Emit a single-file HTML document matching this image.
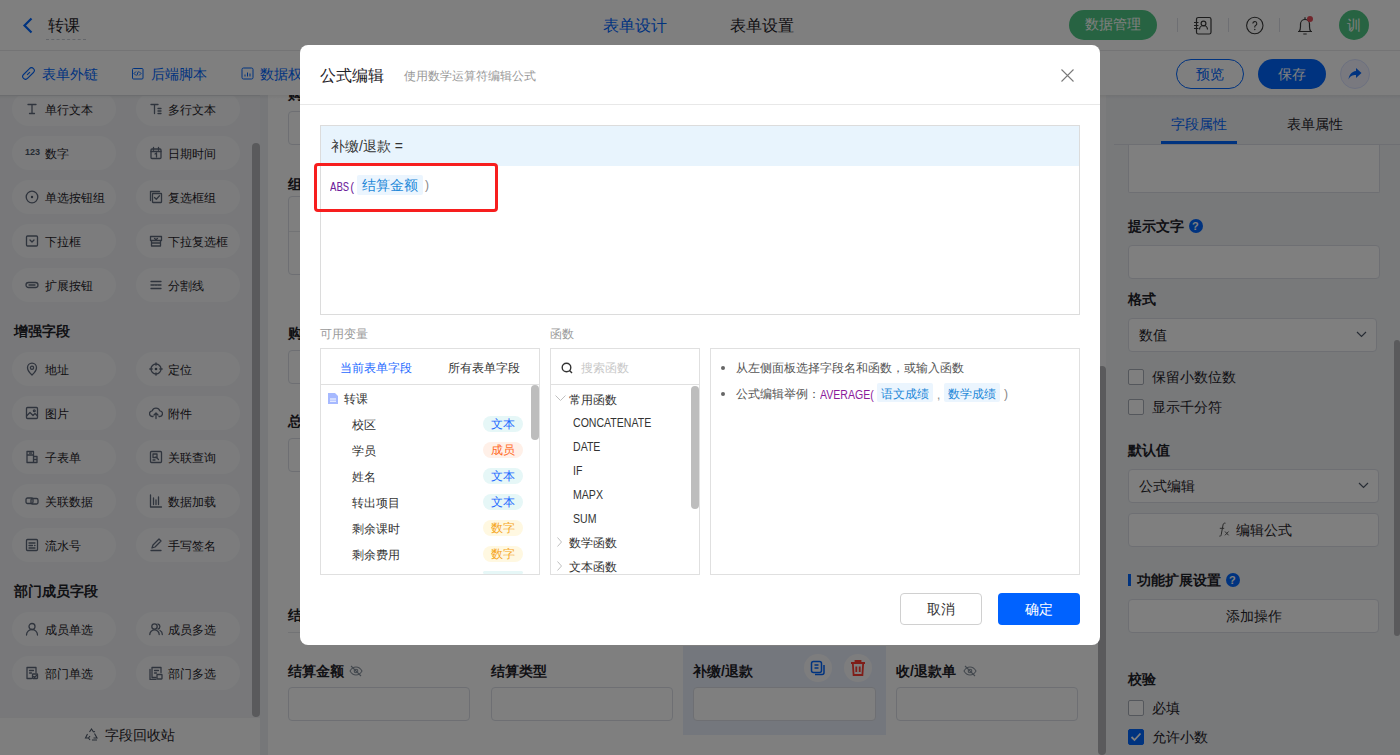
<!DOCTYPE html>
<html><head><meta charset="utf-8">
<style>
*{box-sizing:border-box;margin:0;padding:0}
html,body{width:1400px;height:755px;overflow:hidden;font-family:"Liberation Sans",sans-serif;color:#1f2329;background:#fff}
.abs{position:absolute}
.t{position:absolute;white-space:nowrap;line-height:1}
#page{position:absolute;left:0;top:0;width:1400px;height:755px;background:#fff;overflow:hidden}
#mask{position:absolute;left:0;top:0;width:1400px;height:755px;background:rgba(0,0,0,.5)}
#modal{position:absolute;left:300px;top:45px;width:800px;height:600px;background:#fff;border-radius:8px;overflow:hidden}
.pill{position:absolute;width:104px;height:34px;border-radius:17px;background:#f8f9fb}
.ic{position:absolute;fill:none;stroke:#5f687a;stroke-width:1.3;stroke-linecap:round;stroke-linejoin:round}
.pt{font-size:12px;color:#1f2329}
.num123{font-size:9px;font-weight:bold;color:#4e5969;letter-spacing:0}
.sec{font-size:14px;font-weight:bold;color:#1f2329}
.lbl{font-size:14px;font-weight:bold;color:#1f2329}
.cb{width:16px;height:16px;border:1px solid #a9aeb8;border-radius:2px;background:#fff}
.m12{font-size:12px;color:#333}
.fn{font-size:12px;color:#333;transform:scaleX(.88);transform-origin:0 0}
.tag{position:absolute;width:40px;height:16px;border-radius:8px;font-size:12px;line-height:16px;text-align:center}
.t1{background:#e6f7f7;color:#1f6bff}
.t2{background:#fff0e8;color:#ff6a1f}
.t3{background:#fff8e1;color:#f5a623}
.inp{position:absolute;border:1px solid #dcdfe6;border-radius:4px;background:#fff}
</style></head><body>
<div id="page">
  <!-- sidebar -->
  <div class="abs" style="left:0;top:95px;width:260px;height:660px;background:#f0f1f4"></div>
  <div class="pill" style="left:12px;top:92px"></div>
<svg class="ic" style="left:25px;top:102px" width="14" height="14" viewBox="0 0 14 14"><path d="M3 2.5h8M7 2.5v9M4.5 11.5h5" /></svg>
<div class="t pt" style="left:45px;top:104px">单行文本</div>
<div class="pill" style="left:136px;top:92px"></div>
<svg class="ic" style="left:149px;top:102px" width="14" height="14" viewBox="0 0 14 14"><path d="M2 2.5h7M5.5 2.5v9M9 6.5h3M9 9h3M9 11.5h3"/></svg>
<div class="t pt" style="left:168px;top:104px">多行文本</div>
<div class="pill" style="left:12px;top:136px"></div>
<div class="t num123" style="left:25px;top:148px">123</div>
<div class="t pt" style="left:45px;top:148px">数字</div>
<div class="pill" style="left:136px;top:136px"></div>
<svg class="ic" style="left:149px;top:146px" width="14" height="14" viewBox="0 0 14 14"><rect x="2" y="3" width="10" height="9.5" rx="1"/><path d="M2 5.5h10M4.5 1.5v2.5M9.5 1.5v2.5M6 8l1.5-1v4"/></svg>
<div class="t pt" style="left:168px;top:148px">日期时间</div>
<div class="pill" style="left:12px;top:180px"></div>
<svg class="ic" style="left:25px;top:190px" width="14" height="14" viewBox="0 0 14 14"><circle cx="7" cy="7" r="5.8"/><circle cx="7" cy="7" r="1.2" fill="#4e5969" stroke="none"/></svg>
<div class="t pt" style="left:45px;top:192px">单选按钮组</div>
<div class="pill" style="left:136px;top:180px"></div>
<svg class="ic" style="left:149px;top:190px" width="14" height="14" viewBox="0 0 14 14"><path d="M1.5 10.5V1.5h9"/><rect x="3.5" y="3.5" width="9" height="9" rx="0.5"/><path d="M5.5 7.5l1.8 1.8 3.2-3.5"/></svg>
<div class="t pt" style="left:168px;top:192px">复选框组</div>
<div class="pill" style="left:12px;top:224px"></div>
<svg class="ic" style="left:25px;top:234px" width="14" height="14" viewBox="0 0 14 14"><rect x="1.5" y="2" width="11" height="10" rx="1"/><path d="M5 6l2 2 2-2"/></svg>
<div class="t pt" style="left:45px;top:236px">下拉框</div>
<div class="pill" style="left:136px;top:224px"></div>
<svg class="ic" style="left:149px;top:234px" width="14" height="14" viewBox="0 0 14 14"><path d="M1.5 2.5h11v4h-11zM2.5 6.5v5.5h9V6.5M2.5 9h9M5.5 4.5l1.5 1 1.5-1"/></svg>
<div class="t pt" style="left:168px;top:236px">下拉复选框</div>
<div class="pill" style="left:12px;top:268px"></div>
<svg class="ic" style="left:25px;top:278px" width="14" height="14" viewBox="0 0 14 14"><rect x="1" y="4.5" width="12" height="5" rx="2.5"/><path d="M4 7h6"/></svg>
<div class="t pt" style="left:45px;top:280px">扩展按钮</div>
<div class="pill" style="left:136px;top:268px"></div>
<svg class="ic" style="left:149px;top:278px" width="14" height="14" viewBox="0 0 14 14"><path d="M2 3.5h10M2 7h3M6 7h2M9 7h3M2 10.5h10"/></svg>
<div class="t pt" style="left:168px;top:280px">分割线</div>
<div class="pill" style="left:12px;top:352px"></div>
<svg class="ic" style="left:25px;top:362px" width="14" height="14" viewBox="0 0 14 14"><path d="M7 13s-4.5-4.2-4.5-7.3a4.5 4.5 0 0 1 9 0C11.5 8.8 7 13 7 13z"/><circle cx="7" cy="5.8" r="1.6"/></svg>
<div class="t pt" style="left:45px;top:364px">地址</div>
<div class="pill" style="left:136px;top:352px"></div>
<svg class="ic" style="left:149px;top:362px" width="14" height="14" viewBox="0 0 14 14"><circle cx="7" cy="7" r="5"/><circle cx="7" cy="7" r="1.3" fill="#4e5969" stroke="none"/><path d="M7 .8v2.4M7 10.8v2.4M.8 7h2.4M10.8 7h2.4"/></svg>
<div class="t pt" style="left:168px;top:364px">定位</div>
<div class="pill" style="left:12px;top:396px"></div>
<svg class="ic" style="left:25px;top:406px" width="14" height="14" viewBox="0 0 14 14"><rect x="1.5" y="1.5" width="11" height="11" rx="1"/><path d="M1.5 10l3.5-3.5 3 3 2-2 2.5 2.5"/><circle cx="9.3" cy="4.7" r="0.9"/></svg>
<div class="t pt" style="left:45px;top:408px">图片</div>
<div class="pill" style="left:136px;top:396px"></div>
<svg class="ic" style="left:149px;top:406px" width="14" height="14" viewBox="0 0 14 14"><path d="M4 10.5H3.5a2.8 2.8 0 0 1-.3-5.6 4 4 0 0 1 7.6 0 2.8 2.8 0 0 1-.3 5.6H10M7 12.5V7M5 9l2-2 2 2"/></svg>
<div class="t pt" style="left:168px;top:408px">附件</div>
<div class="pill" style="left:12px;top:440px"></div>
<svg class="ic" style="left:25px;top:450px" width="14" height="14" viewBox="0 0 14 14"><path d="M2 1.5h6.5v11H2zM2 5h6.5M8.5 6.5h3.5v6H8.5M8.5 9.5h3.5M4.5 3.2h2"/></svg>
<div class="t pt" style="left:45px;top:452px">子表单</div>
<div class="pill" style="left:136px;top:440px"></div>
<svg class="ic" style="left:149px;top:450px" width="14" height="14" viewBox="0 0 14 14"><rect x="1.5" y="1.5" width="11" height="11" rx="1"/><rect x="4" y="4" width="4" height="3.5"/><path d="M7 7l2.5 2.5M4 10h2"/></svg>
<div class="t pt" style="left:168px;top:452px">关联查询</div>
<div class="pill" style="left:12px;top:484px"></div>
<svg class="ic" style="left:25px;top:494px" width="14" height="14" viewBox="0 0 14 14"><rect x="1" y="4" width="7" height="5.5" rx="1.5"/><rect x="6" y="4.5" width="7" height="5.5" rx="1.5"/></svg>
<div class="t pt" style="left:45px;top:496px">关联数据</div>
<div class="pill" style="left:136px;top:484px"></div>
<svg class="ic" style="left:149px;top:494px" width="14" height="14" viewBox="0 0 14 14"><path d="M1.5 1v12h11M4.5 4v6.5M7 6v4.5M9.5 3v7.5"/></svg>
<div class="t pt" style="left:168px;top:496px">数据加载</div>
<div class="pill" style="left:12px;top:528px"></div>
<svg class="ic" style="left:25px;top:538px" width="14" height="14" viewBox="0 0 14 14"><rect x="1.5" y="1.5" width="11" height="11" rx="1"/><path d="M4 5h6M4 7.5h3.5M4 10h6M9.5 7.5h.5"/></svg>
<div class="t pt" style="left:45px;top:540px">流水号</div>
<div class="pill" style="left:136px;top:528px"></div>
<svg class="ic" style="left:149px;top:538px" width="14" height="14" viewBox="0 0 14 14"><path d="M2 12.5h10M3 10l1-3 6-6 2 2-6 6z"/></svg>
<div class="t pt" style="left:168px;top:540px">手写签名</div>
<div class="pill" style="left:12px;top:612px"></div>
<svg class="ic" style="left:25px;top:622px" width="14" height="14" viewBox="0 0 14 14"><circle cx="7" cy="4.5" r="3"/><path d="M1.5 13a5.5 5.5 0 0 1 11 0"/></svg>
<div class="t pt" style="left:45px;top:624px">成员单选</div>
<div class="pill" style="left:136px;top:612px"></div>
<svg class="ic" style="left:149px;top:622px" width="14" height="14" viewBox="0 0 14 14"><circle cx="5.5" cy="4.5" r="2.7"/><path d="M.8 12.5a4.7 4.7 0 0 1 9.4 0M9 2a2.6 2.6 0 0 1 0 5M11 8.5a4.3 4.3 0 0 1 2.3 4"/></svg>
<div class="t pt" style="left:168px;top:624px">成员多选</div>
<div class="pill" style="left:12px;top:656px"></div>
<svg class="ic" style="left:25px;top:666px" width="14" height="14" viewBox="0 0 14 14"><path d="M2 1.5h9v5M2 1.5v11h4.5M4.5 4.5h4M4.5 7h2"/><rect x="7.5" y="8" width="5" height="4.5" rx="0.5"/><path d="M8.5 10.5l1 1 2-2"/></svg>
<div class="t pt" style="left:45px;top:668px">部门单选</div>
<div class="pill" style="left:136px;top:656px"></div>
<svg class="ic" style="left:149px;top:666px" width="14" height="14" viewBox="0 0 14 14"><path d="M1 3.5v10h6M3 1.5h9v5M3 1.5v10h4M5.5 4.5h4M5.5 7h2"/><rect x="8" y="8.5" width="5" height="4.5" rx="0.5"/></svg>
<div class="t pt" style="left:168px;top:668px">部门多选</div>
  <div class="t sec" style="left:14px;top:324px">增强字段</div>
  <div class="t sec" style="left:14px;top:584px">部门成员字段</div>
  <div class="abs" style="left:0;top:717px;width:260px;height:38px;background:#fdfdfd;border-top:1px solid #f0f0f2"></div>
  <svg class="abs" style="left:84px;top:728px" width="15" height="14" viewBox="0 0 15 14" fill="none" stroke="#4e5969" stroke-width="1.1"><path d="M5.5 4L7.5 1l2 3M10.5 5.5l2.5 4.5H9.5M4.5 10H1.5L3.5 6M6 12l-1.5-2L6 8M11 3.5l-1.5.5M8 12h5"/></svg>
  <div class="t" style="left:105px;top:728px;font-size:14px;color:#1f2329">字段回收站</div>
  <div class="abs" style="left:252px;top:143px;width:8px;height:574px;border-radius:4px;background:#b4b5b8"></div>
  <div class="abs" style="left:0;top:95px;width:260px;height:1px;background:#e5e6eb"></div>


  <!-- canvas -->
  <div class="abs" style="left:260px;top:95px;width:846px;height:660px;background:#eceef2"></div>
  <div class="abs" style="left:268px;top:95px;width:830px;height:660px;background:#fff"></div>
  <div class="t lbl" style="left:288px;top:87px">购买课时</div>
  <div class="inp" style="left:288px;top:111px;width:183px;height:34px"></div>
  <div class="t lbl" style="left:288px;top:177px">组合项目</div>
  <div class="inp" style="left:288px;top:196px;width:790px;height:79px"></div>
  <div class="abs" style="left:289px;top:231px;width:788px;height:1px;background:#e5e6eb"></div>
  <div class="t lbl" style="left:288px;top:326px">购买金额</div>
  <div class="inp" style="left:288px;top:350px;width:183px;height:34px"></div>
  <div class="t lbl" style="left:288px;top:414px">总金额</div>
  <div class="inp" style="left:288px;top:438px;width:183px;height:34px"></div>
  <div class="t lbl" style="left:288px;top:608px">结算信息</div>
  <div class="abs" style="left:288px;top:632px;width:790px;height:1px;background:#e5e6eb"></div>
  <div class="abs" style="left:683px;top:646px;width:203px;height:89px;background:#e9eefb"></div>
  <div class="t lbl" style="left:288px;top:664px">结算金额</div>
  <svg class="abs" style="left:349px;top:665px" width="14" height="12" viewBox="0 0 14 12" fill="none" stroke="#86909c" stroke-width="1.1"><path d="M1 6s2.3-4 6-4 6 4 6 4-2.3 4-6 4-6-4-6-4z"/><circle cx="7" cy="6" r="1.8"/><path d="M2 1l10 10"/></svg>
  <div class="inp" style="left:288px;top:687px;width:182px;height:34px"></div>
  <div class="t lbl" style="left:491px;top:664px">结算类型</div>
  <div class="inp" style="left:491px;top:687px;width:182px;height:34px"></div>
  <div class="t lbl" style="left:693px;top:664px">补缴/退款</div>
  <div class="abs" style="left:804px;top:654px;width:28px;height:28px;border-radius:14px;background:#fbfbfc"></div>
  <svg class="abs" style="left:810px;top:660px" width="16" height="16" viewBox="0 0 16 16" fill="none" stroke="#0066ff" stroke-width="1.5"><rect x="1.5" y="1.5" width="10" height="11" rx="2"/><path d="M4.5 5h4M4.5 8h4M14 5v7.5a2 2 0 0 1-2 2H5"/></svg>
  <div class="abs" style="left:844px;top:654px;width:28px;height:28px;border-radius:14px;background:#fbfbfc"></div>
  <svg class="abs" style="left:849px;top:659px" width="18" height="18" viewBox="0 0 18 18" fill="none" stroke="#ff3b30" stroke-width="1.8"><path d="M2 4h14M6.5 4V2h5v2M3.8 4l.8 12h8.8l.8-12M7.3 7.5v5.5M10.7 7.5v5.5"/></svg>
  <div class="inp" style="left:693px;top:687px;width:183px;height:34px"></div>
  <div class="t lbl" style="left:896px;top:664px">收/退款单</div>
  <svg class="abs" style="left:963px;top:665px" width="14" height="12" viewBox="0 0 14 12" fill="none" stroke="#86909c" stroke-width="1.1"><path d="M1 6s2.3-4 6-4 6 4 6 4-2.3 4-6 4-6-4-6-4z"/><circle cx="7" cy="6" r="1.8"/><path d="M2 1l10 10"/></svg>
  <div class="inp" style="left:896px;top:687px;width:182px;height:34px"></div>
  <div class="abs" style="left:1098px;top:95px;width:8px;height:660px;background:#f9f9fa"></div>
  <div class="abs" style="left:1098px;top:366px;width:8px;height:389px;border-radius:4px;background:#b4b5b8"></div>

  <!-- right panel -->
  <div class="abs" style="left:1106px;top:95px;width:294px;height:660px;background:#f0f2f5"></div>
  <div class="t" style="left:1171px;top:117px;font-size:14px;color:#0066ff">字段属性</div>
  <div class="t" style="left:1287px;top:117px;font-size:14px;color:#1f2329">表单属性</div>
  <div class="abs" style="left:1114px;top:144px;width:286px;height:1px;background:#dcdfe6"></div>
  <div class="abs" style="left:1161px;top:141px;width:76px;height:3px;background:#0066ff"></div>
  <div class="inp" style="left:1128px;top:145px;width:252px;height:48px;border-top:none;border-radius:0 0 2px 2px"></div>
  <div class="t lbl" style="left:1128px;top:219px">提示文字</div>
  <div class="abs" style="left:1189px;top:219px;width:14px;height:14px;border-radius:7px;background:#0066ff"></div>
  <div class="t" style="left:1192px;top:221px;font-size:11px;font-weight:bold;color:#fff">?</div>
  <div class="inp" style="left:1128px;top:245px;width:252px;height:34px"></div>
  <div class="t lbl" style="left:1128px;top:292px">格式</div>
  <div class="inp" style="left:1128px;top:318px;width:249px;height:34px"></div>
  <div class="t" style="left:1139px;top:328px;font-size:14px;color:#1f2329">数值</div>
  <svg class="abs" style="left:1356px;top:331px" width="11" height="7" viewBox="0 0 11 7" fill="none" stroke="#4e5969" stroke-width="1.2"><path d="M1 1l4.5 4.5L10 1"/></svg>
  <div class="abs cb" style="left:1128px;top:369px"></div>
  <div class="t" style="left:1152px;top:370px;font-size:14px;color:#1f2329">保留小数位数</div>
  <div class="abs cb" style="left:1128px;top:399px"></div>
  <div class="t" style="left:1152px;top:400px;font-size:14px;color:#1f2329">显示千分符</div>
  <div class="t lbl" style="left:1128px;top:443px">默认值</div>
  <div class="inp" style="left:1128px;top:469px;width:251px;height:34px"></div>
  <div class="t" style="left:1139px;top:479px;font-size:14px;color:#1f2329">公式编辑</div>
  <svg class="abs" style="left:1358px;top:482px" width="11" height="7" viewBox="0 0 11 7" fill="none" stroke="#4e5969" stroke-width="1.2"><path d="M1 1l4.5 4.5L10 1"/></svg>
  <div class="inp" style="left:1128px;top:513px;width:251px;height:34px"></div>
  <svg class="abs" style="left:1217px;top:522px" width="14" height="15" viewBox="0 0 14 15" fill="none" stroke="#555" stroke-width="1"><path d="M8.5 1.2c-1.3-.4-2.2.2-2.5 1.8L4.2 12.8c-.3 1.3-.9 1.6-1.8 1.3M2.8 6.3h4.4M8 9.5l3.6 3.8M11.6 9.5L8 13.3"/></svg>
  <div class="t" style="left:1236px;top:523px;font-size:14px;color:#1f2329">编辑公式</div>
  <div class="abs" style="left:1128px;top:574px;width:3px;height:12px;background:#0066ff"></div>
  <div class="t lbl" style="left:1137px;top:573px">功能扩展设置</div>
  <div class="abs" style="left:1226px;top:573px;width:14px;height:14px;border-radius:7px;background:#0066ff"></div>
  <div class="t" style="left:1229px;top:575px;font-size:11px;font-weight:bold;color:#fff">?</div>
  <div class="inp" style="left:1128px;top:599px;width:251px;height:34px"></div>
  <div class="t" style="left:1226px;top:609px;font-size:14px;color:#1f2329">添加操作</div>
  <div class="t lbl" style="left:1128px;top:672px">校验</div>
  <div class="abs cb" style="left:1128px;top:700px"></div>
  <div class="t" style="left:1152px;top:701px;font-size:14px;color:#1f2329">必填</div>
  <div class="abs cb" style="left:1128px;top:729px;background:#0066ff;border-color:#0066ff"></div>
  <svg class="abs" style="left:1130px;top:732px" width="12" height="10" viewBox="0 0 12 10" fill="none" stroke="#fff" stroke-width="1.8"><path d="M1.5 5l3 3 6-6.5"/></svg>
  <div class="t" style="left:1152px;top:730px;font-size:14px;color:#1f2329">允许小数</div>
  <div class="abs" style="left:1394px;top:340px;width:6px;height:296px;border-radius:3px;background:#b4b5b8"></div>
  <!-- header -->
  <div class="abs" style="left:0;top:0;width:1400px;height:51px;background:#fff;border-bottom:1px solid #e8e9eb"></div>
  <svg class="abs" style="left:22px;top:17px" width="12" height="17" viewBox="0 0 12 17"><path d="M9.5 1.5L2.5 8.5l7 7" fill="none" stroke="#0066ff" stroke-width="2.2"/></svg>
  <div class="t" style="left:48px;top:18px;font-size:16px;color:#1f2329">转课</div>
  <div class="abs" style="left:46px;top:39px;width:40px;border-top:1px dashed #c9cdd4"></div>
  <div class="t" style="left:603px;top:18px;font-size:16px;color:#0066ff">表单设计</div>
  <div class="t" style="left:730px;top:18px;font-size:16px;color:#1f2329">表单设置</div>
  <div class="abs" style="left:1069px;top:10px;width:88px;height:30px;border-radius:15px;background:#4fc784"></div>
  <div class="t" style="left:1085px;top:17px;font-size:14px;color:#fff">数据管理</div>
  <div class="abs" style="left:1177px;top:18px;width:1px;height:14px;background:#dcdfe6"></div>
  <div class="abs" style="left:1228px;top:18px;width:1px;height:14px;background:#dcdfe6"></div>
  <div class="abs" style="left:1279px;top:18px;width:1px;height:14px;background:#dcdfe6"></div>
  <svg class="abs" style="left:1193px;top:16px" width="20" height="20" viewBox="0 0 20 20" fill="none" stroke="#3a3a3a" stroke-width="1.2"><rect x="3.5" y="1.5" width="14.5" height="16.5" rx="1.8"/><circle cx="10.5" cy="7.5" r="2.4"/><path d="M6.5 13.5a4 4 0 0 1 8 0M1 6.5h4.5M1 9.5h4.5M1 12.5h4.5"/></svg>
  <svg class="abs" style="left:1245px;top:16px" width="20" height="20" viewBox="0 0 20 20" fill="none" stroke="#3a3a3a" stroke-width="1.1"><circle cx="9.8" cy="9.5" r="8.2"/><path d="M7.8 7.5a2 2 0 1 1 2.8 1.9c-.5.25-.8.6-.8 1.2v.9"/><circle cx="9.8" cy="13.5" r=".7" fill="#3a3a3a" stroke="none"/></svg>
  <svg class="abs" style="left:1296px;top:14px" width="20" height="22" viewBox="0 0 20 22" fill="none" stroke="#3a3a3a" stroke-width="1.2"><path d="M2 17.5h14M3.2 17.5c1.2-1.3 1.3-2.5 1.3-5V10a4.5 4.5 0 0 1 9 0v2.5c0 2.5.1 3.7 1.3 5M9 5V3.2M7.3 20h3.4"/><circle cx="14" cy="5" r="3" fill="#e34d59" stroke="none"/></svg>
  <div class="abs" style="left:1339px;top:10px;width:30px;height:30px;border-radius:15px;background:#4fc784"></div>
  <div class="t" style="left:1347px;top:18px;font-size:14px;color:#fff">训</div>

  <div class="abs" style="left:0;top:95px;width:1400px;height:4px;background:linear-gradient(rgba(0,0,0,.06),rgba(0,0,0,0))"></div>
  <!-- toolbar -->
  <div class="abs" style="left:0;top:51px;width:1400px;height:44px;background:#fff"></div>
  <svg class="abs" style="left:22px;top:67px" width="13" height="13" viewBox="0 0 13 13" fill="none" stroke="#0066ff" stroke-width="1.1"><g transform="rotate(45 6.5 6.5)"><rect x="3.7" y="-.5" width="5.6" height="14" rx="2.8"/><path d="M6.5 4.5v4"/></g></svg>
  <div class="t" style="left:42px;top:67px;font-size:14px;color:#0066ff">表单外链</div>
  <svg class="abs" style="left:131px;top:67px" width="13" height="13" viewBox="0 0 13 13" fill="none" stroke="#0066ff" stroke-width="1"><rect x="1.5" y="1.5" width="10.5" height="10.5" rx="1"/><path d="M5 4.5L3 6.5 5 8.5M8 4.5l2 2-2 2M7.3 4.5L5.8 8.5"/></svg>
  <div class="t" style="left:151px;top:67px;font-size:14px;color:#0066ff">后端脚本</div>
  <svg class="abs" style="left:241px;top:67px" width="13" height="13" viewBox="0 0 13 13" fill="none" stroke="#0066ff" stroke-width="1"><rect x="1" y="1" width="11" height="11" rx="1.5"/><path d="M4 9.5v-2M6.5 9.5v-4M9 9.5v-3"/></svg>
  <div class="t" style="left:260px;top:67px;font-size:14px;color:#0066ff">数据权限</div>
  <div class="abs" style="left:1176px;top:59px;width:68px;height:30px;border-radius:15px;border:1px solid #0066ff;background:#fff"></div>
  <div class="t" style="left:1196px;top:67px;font-size:14px;color:#0066ff">预览</div>
  <div class="abs" style="left:1258px;top:59px;width:68px;height:30px;border-radius:15px;background:#0066ff"></div>
  <div class="t" style="left:1278px;top:67px;font-size:14px;color:#fff">保存</div>
  <div class="abs" style="left:1340px;top:59px;width:30px;height:30px;border-radius:15px;background:#f2f3ff;border:1px solid #d9e1ff"></div>
  <svg class="abs" style="left:1347px;top:66px" width="16" height="16" viewBox="0 0 16 16"><path d="M9 2l5.5 5L9 12V9C5.5 9 3 10 1.5 13.5 2 9 4.5 5.5 9 5z" fill="#0066ff"/></svg>

</div>
<div id="mask"></div>

<div id="modal">
  <div class="t" style="left:20px;top:23px;font-size:16px;color:#1f2329">公式编辑</div>
  <div class="t" style="left:104px;top:25px;font-size:12px;color:#999">使用数学运算符编辑公式</div>
  <svg class="abs" style="left:761px;top:24px" width="13" height="13" viewBox="0 0 13 13" fill="none" stroke="#7a7a7a" stroke-width="1.1"><path d="M.5 .5l12 12M12.5 .5l-12 12"/></svg>
  <div class="abs" style="left:0px;top:59px;width:800px;height:1px;background:#e8e8e8"></div>
  <div class="abs" style="left:20px;top:80px;width:760px;height:190px;border:1px solid #dcdcdc"></div>
  <div class="abs" style="left:21px;top:81px;width:758px;height:40px;background:#e8f4fd"></div>
  <div class="t" style="left:31px;top:94px;font-size:14px;color:#333">补缴/退款 =</div>
  <div class="t" style="left:30px;top:136px;font-size:13px;font-family:'Liberation Mono',monospace;color:#6f1f9c;transform:scaleX(.82);transform-origin:0 0">ABS(</div>
  <div class="abs" style="left:57px;top:130px;width:66px;height:20px;border-radius:2px;background:#ebf5fe"></div>
  <div class="t" style="left:62px;top:133px;font-size:14px;color:#1b87d8">结算金额</div>
  <div class="t" style="left:125px;top:134px;font-size:12px;color:#888">)</div>
  <div class="abs" style="left:14px;top:118px;width:184px;height:49px;border:3px solid #f71e1e;border-radius:4px"></div>

  <div class="t" style="left:20px;top:283px;font-size:12px;color:#999">可用变量</div>
  <div class="t" style="left:250px;top:283px;font-size:12px;color:#999">函数</div>

  <div class="abs" style="left:20px;top:303px;width:220px;height:227px;border:1px solid #e0e0e0"></div>
  <div class="abs" style="left:21px;top:339px;width:218px;height:1px;background:#e0e0e0"></div>
  <div class="t m12" style="left:40px;top:317px;color:#1f6bff">当前表单字段</div>
  <div class="t m12" style="left:148px;top:317px">所有表单字段</div>
  <svg class="abs" style="left:28px;top:348px" width="11" height="11" viewBox="0 0 11 11"><path d="M0 0h7l3 3v8H0z" fill="#a6b9ff"/><path d="M2 6h6M2 8.2h6" stroke="#fff" stroke-width="1"/></svg>
  <div class="t m12" style="left:44px;top:348px">转课</div>
  <div class="t m12" style="left:52px;top:374px">校区</div><div class="tag t1" style="left:183px;top:371px">文本</div><div class="t m12" style="left:52px;top:400px">学员</div><div class="tag t2" style="left:183px;top:397px">成员</div><div class="t m12" style="left:52px;top:426px">姓名</div><div class="tag t1" style="left:183px;top:423px">文本</div><div class="t m12" style="left:52px;top:452px">转出项目</div><div class="tag t1" style="left:183px;top:449px">文本</div><div class="t m12" style="left:52px;top:478px">剩余课时</div><div class="tag t3" style="left:183px;top:475px">数字</div><div class="t m12" style="left:52px;top:504px">剩余费用</div><div class="tag t3" style="left:183px;top:501px">数字</div><div class="tag t1" style="left:183px;top:526px;height:3px"></div>
  <div class="abs" style="left:231px;top:340px;width:8px;height:55px;border-radius:4px;background:#bdbdbd"></div>

  <div class="abs" style="left:250px;top:303px;width:150px;height:227px;border:1px solid #e0e0e0"></div>
  <div class="abs" style="left:251px;top:339px;width:148px;height:1px;background:#e0e0e0"></div>
  <svg class="abs" style="left:261px;top:317px" width="12" height="12" viewBox="0 0 12 12" fill="none" stroke="#333" stroke-width="1.4"><circle cx="5.5" cy="5.5" r="4.3"/><path d="M8.5 8.5l2.5 2.5"/></svg>
  <div class="t m12" style="left:281px;top:317px;color:#c8c8c8">搜索函数</div>
  <svg class="abs" style="left:255px;top:350px" width="11" height="7" viewBox="0 0 11 7" fill="none" stroke="#c0c0c0" stroke-width="1"><path d="M.5 .5l5 5 5-5"/></svg>
  <div class="t m12" style="left:269px;top:349px">常用函数</div>
  <div class="t fn" style="left:273px;top:372px">CONCATENATE</div><div class="t fn" style="left:273px;top:396px">DATE</div><div class="t fn" style="left:273px;top:420px">IF</div><div class="t fn" style="left:273px;top:444px">MAPX</div><div class="t fn" style="left:273px;top:468px">SUM</div>
  <svg class="abs" style="left:257px;top:492px" width="6" height="10" viewBox="0 0 6 10" fill="none" stroke="#c0c0c0" stroke-width="1"><path d="M.5 .5l4 4.5-4 4.5"/></svg>
  <div class="t m12" style="left:269px;top:492px">数学函数</div>
  <svg class="abs" style="left:257px;top:516px" width="6" height="10" viewBox="0 0 6 10" fill="none" stroke="#c0c0c0" stroke-width="1"><path d="M.5 .5l4 4.5-4 4.5"/></svg>
  <div class="t m12" style="left:269px;top:516px">文本函数</div>
  <div class="abs" style="left:391px;top:341px;width:8px;height:123px;border-radius:4px;background:#bdbdbd"></div>

  <div class="abs" style="left:410px;top:303px;width:370px;height:227px;border:1px solid #e0e0e0"></div>
  <div class="abs" style="left:421px;top:321px;width:4px;height:4px;border-radius:2px;background:#666"></div>
  <div class="t m12" style="left:436px;top:317px;color:#555">从左侧面板选择字段名和函数，或输入函数</div>
  <div class="abs" style="left:421px;top:347px;width:4px;height:4px;border-radius:2px;background:#666"></div>
  <div class="t m12" style="left:436px;top:343px;color:#555">公式编辑举例：</div>
  <div class="t fn" style="left:520px;top:344px;color:#8b1a9b">AVERAGE(</div>
  <div class="abs" style="left:577px;top:338px;width:56px;height:19px;border-radius:2px;background:#ebf5fe"></div>
  <div class="t m12" style="left:581px;top:343px;color:#1b87d8">语文成绩</div>
  <div class="t m12" style="left:637px;top:344px;color:#888">,</div>
  <div class="abs" style="left:644px;top:338px;width:56px;height:19px;border-radius:2px;background:#ebf5fe"></div>
  <div class="t m12" style="left:648px;top:343px;color:#1b87d8">数学成绩</div>
  <div class="t m12" style="left:704px;top:343px;color:#888">)</div>

  <div class="abs" style="left:600px;top:548px;width:82px;height:32px;border:1px solid #d0d0d0;border-radius:4px"></div>
  <div class="t" style="left:627px;top:557px;font-size:14px;color:#333">取消</div>
  <div class="abs" style="left:698px;top:548px;width:82px;height:32px;border-radius:4px;background:#0062ff"></div>
  <div class="t" style="left:725px;top:557px;font-size:14px;color:#fff;font-weight:500">确定</div>
</div>
</body></html>
